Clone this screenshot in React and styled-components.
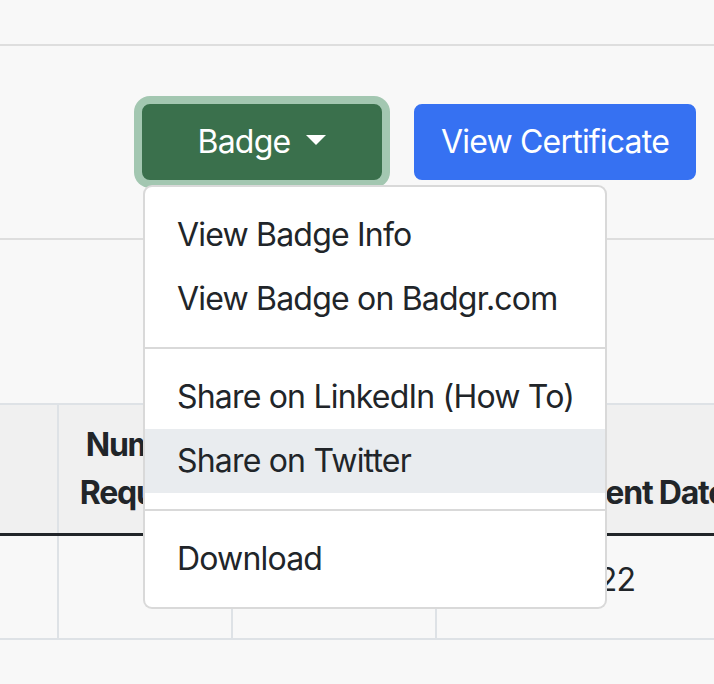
import React from 'react';
import styled, { createGlobalStyle } from 'styled-components';

const GlobalStyle = createGlobalStyle`
  html, body {
    margin: 0;
    padding: 0;
    height: 100%;
    overflow: hidden;
    background: #f8f8f8;
  }
  body {
    font-family: Inter, "Noto Sans", sans-serif;
    color: #212529;
    letter-spacing: -0.8px;
  }
`;

const Page = styled.div`
  width: 714px;
  height: 684px;
  overflow: hidden;
`;

const TopBar = styled.div`
  height: 44px;
  border-bottom: 2px solid #dedede;
`;

const ActionBar = styled.div`
  height: 192px;
  display: flex;
  align-items: center;
  justify-content: flex-end;
  gap: 32px;
  padding-right: 18px;
  border-bottom: 2px solid #dedede;
`;

const Spacer = styled.div`
  height: 163px;
`;

const BaseButton = styled.button`
  font-family: inherit;
  font-size: 32px;
  line-height: 48px;
  letter-spacing: -0.8px;
  color: #fff;
  padding: 12px 25px;
  border-radius: 8px;
  cursor: pointer;
  white-space: nowrap;
`;

const BadgeButton = styled(BaseButton)`
  width: 240px;
  background: #3a704c;
  border: 2px solid #3a704c;
  box-shadow: 0 0 0 8px #a3c7b1;

  &::after {
    content: '';
    display: inline-block;
    margin-left: 16px;
    vertical-align: 8px;
    border-top: 10px solid #fff;
    border-left: 10px solid transparent;
    border-right: 10px solid transparent;
  }
`;

const CertButton = styled(BaseButton)`
  background: #3671f2;
  border: 2px solid #3671f2;
`;

const DropdownWrap = styled.div`
  position: relative;
`;

const Menu = styled.div`
  position: absolute;
  z-index: 5;
  top: calc(100% + 5px);
  left: 1px;
  width: 464px;
  box-sizing: border-box;
  padding: 16px 0;
  background: #fff;
  border: 2px solid rgba(0, 0, 0, 0.15);
  border-radius: 9px;
`;

const MenuItem = styled.div`
  padding: 8px 32px;
  font-size: 32px;
  line-height: 48px;
  white-space: nowrap;
  color: #212529;
  background: ${p => (p.$active ? '#e9ecef' : 'transparent')};
`;

const Divider = styled.hr`
  margin: 16px 0;
  height: 0;
  border: 0;
  border-top: 2px solid rgba(0, 0, 0, 0.15);
`;

const Table = styled.table`
  margin-left: -100px;
  border-collapse: collapse;
  table-layout: fixed;
  width: 950px;
`;

const HeadCell = styled.th`
  width: ${p => p.$w}px;
  padding: 16px 16px 16px ${p => p.$pl || 16}px;
  font-size: 32px;
  line-height: 48px;
  font-weight: 700;
  letter-spacing: -1.2px;
  text-align: ${p => p.$align || 'center'};
  vertical-align: bottom;
  background: #f0f0f0;
  border: 2px solid #dee2e6;
  border-bottom: 3px solid #212529;
  white-space: ${p => (p.$wrap ? 'normal' : 'nowrap')};
`;

const Cell = styled.td`
  padding: 20px 16px 34px ${p => p.$pl || 16}px;
  font-size: 32px;
  line-height: 48px;
  text-align: ${p => p.$align || 'center'};
  border: 2px solid #dee2e6;
  border-top: 0;
  white-space: nowrap;
`;

const App = () => (
  <Page>
    <GlobalStyle />
    <TopBar />
    <ActionBar>
      <DropdownWrap>
        <BadgeButton>Badge</BadgeButton>
        <Menu>
          <MenuItem>View Badge Info</MenuItem>
          <MenuItem>View Badge on Badgr.com</MenuItem>
          <Divider />
          <MenuItem>Share on LinkedIn (How To)</MenuItem>
          <MenuItem $active>Share on Twitter</MenuItem>
          <Divider />
          <MenuItem>Download</MenuItem>
        </Menu>
      </DropdownWrap>
      <CertButton>View Certificate</CertButton>
    </ActionBar>
    <Spacer />
    <Table>
      <thead>
        <tr>
          <HeadCell $w={123} />
          <HeadCell $w={140} $wrap>Number Required</HeadCell>
          <HeadCell $w={170} />
          <HeadCell $w={381} $align="left" $pl={22}>Achievement Date</HeadCell>
        </tr>
      </thead>
      <tbody>
        <tr>
          <Cell />
          <Cell />
          <Cell />
          <Cell $align="left" $pl={24}>05/04/2022</Cell>
        </tr>
      </tbody>
    </Table>
  </Page>
);

export default App;
